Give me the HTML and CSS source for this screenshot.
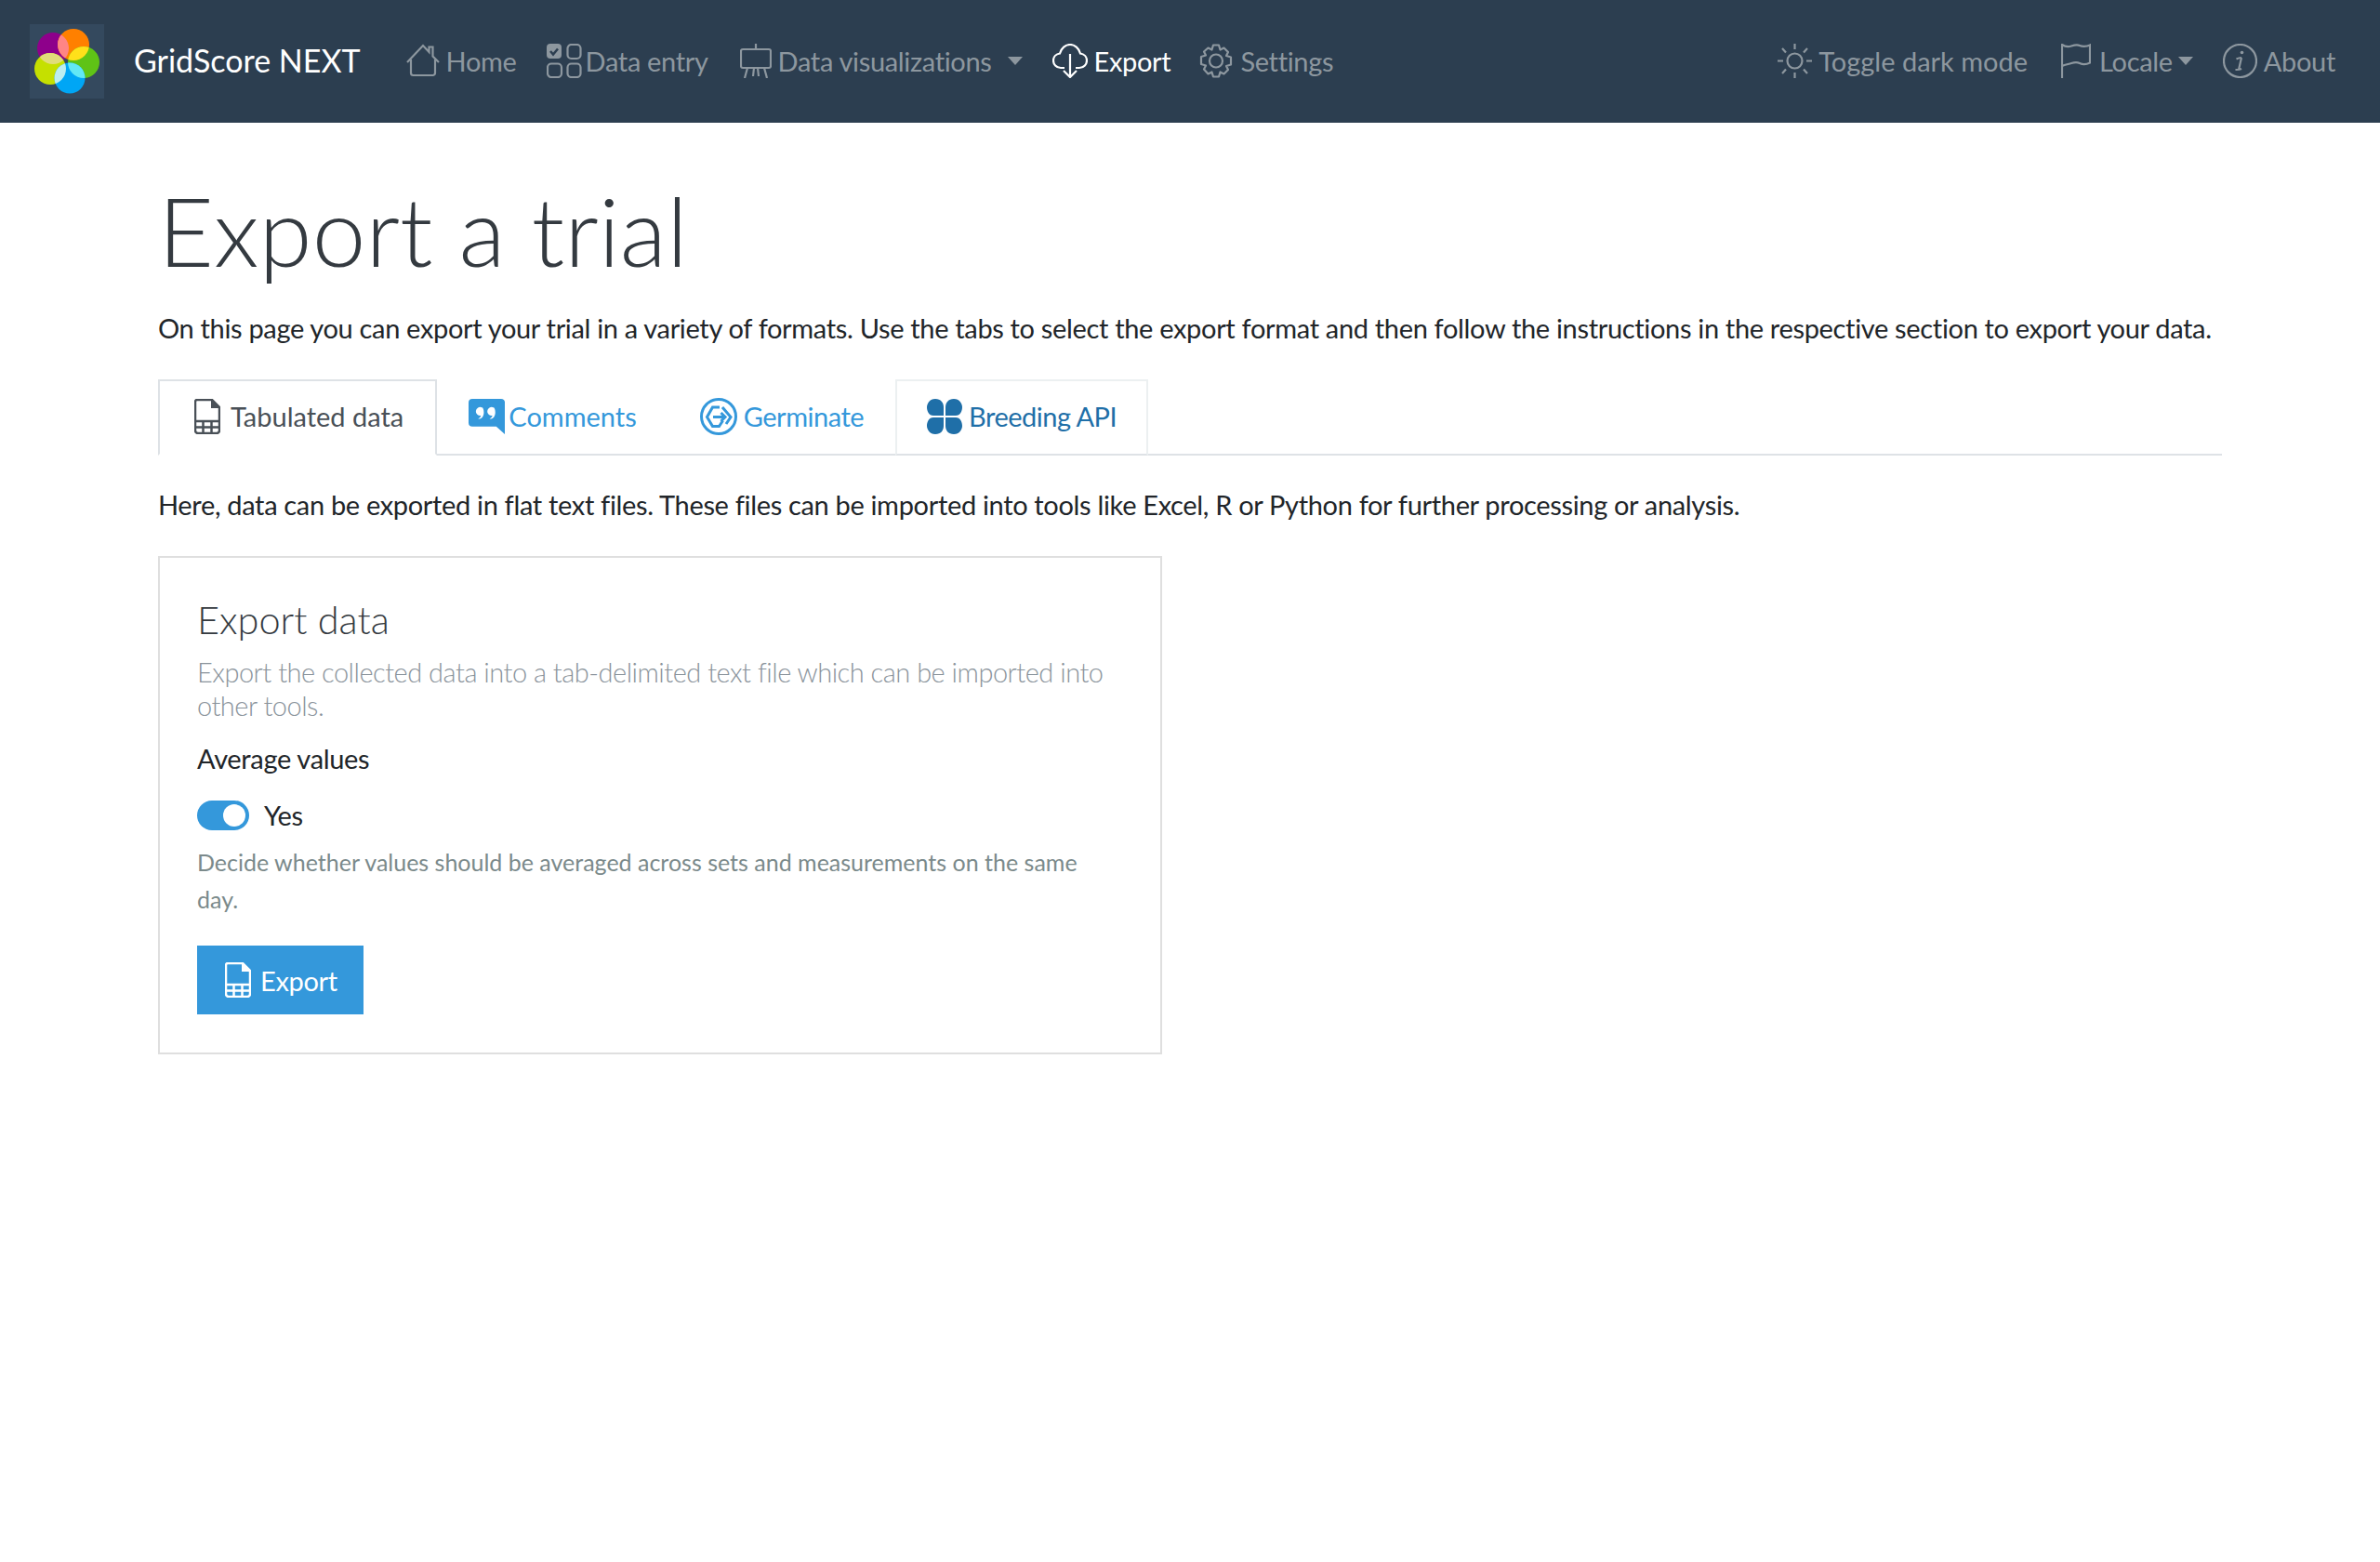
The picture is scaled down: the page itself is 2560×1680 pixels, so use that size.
FILE: index.html
```html
<!DOCTYPE html>
<html lang="en">

<head>
  <meta charset="UTF-8" />
  <meta name="viewport" content="width=device-width, initial-scale=1.0" />
  <title>GridScore NEXT</title>
  <link rel="stylesheet" href="styles.css">
</head>

<body>
  <nav class="navbar">
    <a class="brand" href="#">
      <span class="logo">
        <svg viewBox="0 0 80 80" width="80" height="80">
          <defs>
            <clipPath id="c-purple"><circle cx="25" cy="26" r="17" /></clipPath>
            <clipPath id="c-orange"><circle cx="47" cy="22" r="17" /></clipPath>
            <clipPath id="c-green"><circle cx="58" cy="41" r="17" /></clipPath>
            <clipPath id="c-lime"><circle cx="22" cy="48" r="17" /></clipPath>
          </defs>
          <circle cx="25" cy="26" r="17" fill="#8e008b" />
          <circle cx="47" cy="22" r="17" fill="#ff8000" />
          <circle cx="58" cy="41" r="17" fill="#5fc316" />
          <circle cx="22" cy="48" r="17" fill="#c5e000" />
          <circle cx="43" cy="58" r="16.500" fill="#00a6f5" />
          <circle cx="47" cy="22" r="17" fill="#ff8585" clip-path="url(#c-purple)" />
          <circle cx="58" cy="41" r="17" fill="#ffe01a" clip-path="url(#c-orange)" />
          <circle cx="22" cy="48" r="17" fill="#e0dd7a" clip-path="url(#c-purple)" />
          <circle cx="43" cy="58" r="16.500" fill="#62e8f5" clip-path="url(#c-green)" />
          <circle cx="43" cy="58" r="16.500" fill="#bdeef0" clip-path="url(#c-lime)" />
        </svg>
      </span>
      <span class="brand-name">GridScore NEXT</span>
    </a>

    <ul class="nav-list">
      <li><a class="nav-link" href="#">
          <svg class="nav-icon" viewBox="0 0 36 37"><path d="M1 20 18 2l6.500 7V3.500h4v10L35 20M5 17v14.500a2.500 2.500 0 0 0 2.500 2.500h21a2.500 2.500 0 0 0 2.500-2.500V17" /></svg>Home</a></li>
      <li class="item-entry"><a class="nav-link" href="#">
          <svg class="nav-icon" viewBox="0 0 38 37"><rect x="0" y="0" width="16" height="16" rx="4" fill="currentColor" stroke="none" /><path class="tick" d="m4 8 3 3.500 5-6" /><rect x="22.500" y="1" width="14" height="15" rx="4" /><rect x="1" y="21.500" width="15" height="14.500" rx="4" /><rect x="22.500" y="21.500" width="14" height="14.500" rx="4" /></svg>Data entry</a></li>
      <li><a class="nav-link caret caret-wide" href="#">
          <svg class="nav-icon" viewBox="0 0 34 37"><path d="M17 0v6M3 6h28a2 2 0 0 1 2 2v16a2 2 0 0 1-2 2H3a2 2 0 0 1-2-2V8a2 2 0 0 1 2-2ZM8 26 5 37M26 26l3 11M15 26l-1 9M19 26l1 9" /></svg>Data visualizations</a></li>
      <li><a class="nav-link active" href="#">
          <svg class="nav-icon" viewBox="0 0 38 37"><path d="M13 26H9c-5 0-8-4-8-8s3-7 7-7.500C9.500 5 14 1 19 1s9.500 4 11 9.500c4 .5 7 3.500 7 7.500 0 4-3 8-8 8h-4M19 11v25M12 29l7 7 7-7" /></svg>Export</a></li>
      <li><a class="nav-link" href="#">
          <svg class="nav-icon" viewBox="0 0 38 37"><circle cx="19" cy="18.500" r="7" /><path d="M16 1.500h6l1.500 5 4-2 4.500 4.500-2 4 5 1.500v8l-5 1.500 2 4-4.500 4.500-4-2-1.500 5h-6l-1.500-5-4 2L6 27.500l2-4-5-1.500v-8l5-1.500-2-4L10.500 4.500l4 2Z" stroke-linejoin="round" /></svg>Settings</a></li>
    </ul>

    <ul class="nav-list nav-right">
      <li class="item-toggle"><a class="nav-link" href="#">
          <svg class="nav-icon" viewBox="0 0 37 37"><circle cx="18.500" cy="18.500" r="8" /><path d="M18.500 0v6M18.500 31v6M0 18.500h6M31 18.500h6M5 5l4 4.500M28 27.500l4 4.500M5 32l4-4.500M28 9.500 32 5" /></svg>Toggle dark mode</a></li>
      <li class="item-locale"><a class="nav-link caret" href="#">
          <svg class="nav-icon" viewBox="0 0 32 37"><path d="M1 37V1c3 2 7 2.500 10 1.500s7-1.500 9-.5 7 1.500 11-.5v19c-4 2-8 2-11 .5s-6-1-9 0-7 1.500-10 3" /></svg>Locale</a></li>
      <li><a class="nav-link" href="#">
          <svg class="nav-icon" viewBox="0 0 37 37"><circle cx="18.500" cy="18.500" r="17.500" /><path d="m20 15-3 13M14.500 16.500c2-1 4-1.500 5.500-1.500M13.500 28c2 0 5-.2 6.500-1" /><circle class="dot" cx="20.500" cy="9.500" r="1.800" /></svg>About</a></li>
    </ul>
  </nav>

  <main class="container">
    <h1>Export a trial</h1>
    <p class="lead-text">On this page you can export your trial in a variety of formats. Use the tabs to select the export format and then follow the instructions in the respective section to export your data.</p>

    <ul class="tabs">
      <li class="tab active"><a href="#">
          <svg class="tab-icon icon-file" viewBox="0 0 28 38"><path d="M3 1h16l8 8v25a3 3 0 0 1-3 3H4a3 3 0 0 1-3-3V3a2 2 0 0 1 2-2Z" fill="none" stroke="currentColor" stroke-width="2.500" /><path d="M18 1v9h9Z" fill="currentColor" /><path d="M1 24h26M1 30.500h26M9.500 24v13M18.500 24v13" stroke="currentColor" stroke-width="2.500" fill="none" /></svg>Tabulated data</a></li>
      <li class="tab tab-comments"><a href="#">
          <svg class="tab-icon" viewBox="0 0 38 37"><path d="M4 0h30a4 4 0 0 1 4 4v33l-9-8H4a4 4 0 0 1-4-4V4a4 4 0 0 1 4-4Z" fill="currentColor" /><path d="M14 9a4.500 4.500 0 1 0 -1 8.500c-.3 1.500-1.500 2.500-3 3.500 4 0 6-3 6-7 0-3-1-5-2-5ZM26 9a4.500 4.500 0 1 0 -1 8.500c-.3 1.500-1.500 2.500-3 3.500 4 0 6-3 6-7 0-3-1-5-2-5Z" fill="#fff" /></svg>Comments</a></li>
      <li class="tab tab-tight"><a href="#">
          <svg class="tab-icon icon-round" viewBox="0 0 40 40"><circle cx="20" cy="20" r="18.500" fill="none" stroke="currentColor" stroke-width="3" /><path d="M21 10h-7.500l-6 10.500 6 10h7l4-6M14 20.500h13M22.500 16l4.500 4.500-4.500 4.500M24 10l9 10.500-5 7.500" fill="none" stroke="currentColor" stroke-width="3" /></svg>Germinate</a></li>
      <li class="tab tab-tight hovered"><a href="#">
          <svg class="tab-icon" viewBox="0 0 38 38"><path d="M18 18H7C2 18 0 13 0 9s3-9 9-9 9 4 9 9ZM20 18h11c5 0 7-5 7-9s-3-9-9-9-9 4-9 9ZM18 20H7c-5 0-7 5-7 9s3 9 9 9 9-4 9-9ZM20 20h11c5 0 7 5 7 9s-3 9-9 9-9-4-9-9Z" fill="currentColor" /></svg>Breeding API</a></li>
    </ul>

    <p class="tab-intro">Here, data can be exported in flat text files. These files can be imported into tools like Excel, R or Python for further processing or analysis.</p>

    <section class="card">
      <h4 class="card-title">Export data</h4>
      <p class="card-sub">Export the collected data into a tab-delimited text file which can be imported into other tools.</p>
      <div class="form-label">Average values</div>
      <div class="switch-row">
        <span class="switch"><span class="knob"></span></span>
        <span>Yes</span>
      </div>
      <small class="help">Decide whether values should be averaged across sets and measurements on the same day.</small>
      <button class="btn" type="button">
        <svg class="btn-icon" viewBox="0 0 28 38"><path d="M3 1h16l8 8v25a3 3 0 0 1-3 3H4a3 3 0 0 1-3-3V3a2 2 0 0 1 2-2Z" fill="none" stroke="currentColor" stroke-width="2.500" /><path d="M18 1v9h9Z" fill="currentColor" /><path d="M1 24h26M1 30.500h26M9.500 24v13M18.500 24v13" stroke="currentColor" stroke-width="2.500" fill="none" /></svg>Export</button>
    </section>
  </main>
</body>

</html>
```

FILE: styles.css
```css
body {
  font-family: Lato, "Noto Sans", sans-serif;
  font-size: 29px;
  letter-spacing: -0.33px;
  line-height: 45px;
  color: #212529;
  background-color: #fff;
  margin: 0;
}

a {
  text-decoration: none;
  color: inherit;
}

ul {
  list-style: none;
  margin: 0;
  padding: 0;
}

/* navbar */
.navbar {
  display: flex;
  align-items: center;
  height: 132px;
  padding: 0 32px;
  background-color: #2c3e50;
}

.brand {
  display: flex;
  align-items: center;
  margin-right: 49px;
  color: #fff;
}

.logo {
  display: block;
  width: 80px;
  height: 80px;
  background-color: #34495e;
  margin-right: 32px;
}

.logo svg {
  display: block;
}

.brand-name {
  font-size: 34px;
  letter-spacing: 0;
  padding-bottom: 3px;
}

.nav-list {
  display: flex;
  align-items: center;
  gap: 32px;
  padding-bottom: 2px;
}

.nav-right {
  margin-left: auto;
  padding-right: 16px;
}

.item-entry {
  margin-right: 2px;
}

.item-entry .nav-icon {
  margin-right: 4px;
}

.item-toggle {
  letter-spacing: 0;
}

.item-locale {
  margin-left: 4px;
}

.item-locale .nav-icon {
  margin-right: 9px;
}

.nav-link {
  display: flex;
  align-items: center;
  color: #8d979f;
}

.nav-link.active {
  color: #fff;
  margin-right: -2px;
}

.nav-link.caret::after {
  content: "";
  margin-left: 6px;
  border-top: 9px solid currentColor;
  border-left: 8px solid transparent;
  border-right: 8px solid transparent;
}

.nav-link.caret-wide::after {
  margin-left: 17px;
}

.nav-icon {
  height: 37px;
  width: auto;
  margin-right: 7px;
  fill: none;
  stroke: currentColor;
  stroke-width: 2.200;
  flex-shrink: 0;
}

.nav-icon .tick {
  stroke: #2c3e50;
  stroke-width: 2.500;
}

.nav-icon .dot {
  fill: currentColor;
  stroke: none;
}

/* page */
.container {
  padding: 0 170px;
  width: 2220px;
}

h1 {
  font-size: 103.500px;
  font-weight: 300;
  letter-spacing: 0;
  line-height: 134px;
  color: #343a40;
  margin: 0;
  padding-top: 48px;
}

.lead-text {
  margin: 16px 0 33px;
}

.tabs {
  display: flex;
  height: 82px;
  border-bottom: 2px solid #dee2e6;
  box-sizing: border-box;
}

.tab a {
  display: flex;
  align-items: center;
  height: 82px;
  box-sizing: border-box;
  padding: 0 32px 3px;
  border: 2px solid transparent;
  color: #3498db;
  letter-spacing: 0;
}

.tab.active a {
  color: #495057;
  background-color: #fff;
  border-color: #dee2e6 #dee2e6 #fff;
  padding-right: 34px;
}

.tab.hovered a {
  color: #1f6fa8;
  border-color: #ecf0f1 #ecf0f1 #dee2e6;
}

.tab-tight a {
  letter-spacing: -0.5px;
}

.tab-icon {
  height: 38px;
  width: auto;
  margin-right: 7px;
}

.tab-comments .tab-icon {
  margin-right: 4px;
}

.icon-file {
  margin-left: 5px;
  margin-right: 11px;
}

.icon-round {
  height: 40px;
}

.tab-intro {
  margin: 30px 0 33px;
}

/* card */
.card {
  width: 1080px;
  height: 536px;
  box-sizing: border-box;
  padding: 40px;
  border: 2px solid #dfdfdf;
}

.card-title {
  font-size: 41.500px;
  font-weight: 300;
  letter-spacing: 0;
  line-height: 50px;
  color: #343a40;
  margin: 1px 0 14px;
}

.card-sub {
  font-weight: 300;
  letter-spacing: -0.5px;
  line-height: 36px;
  color: #8a939b;
  margin: 0 0 16px;
}

.form-label {
  margin-bottom: 16px;
}

.switch-row {
  display: flex;
  align-items: center;
  gap: 16px;
  height: 45px;
}

.switch {
  display: block;
  width: 56px;
  height: 32px;
  border-radius: 16px;
  background-color: #3498db;
  padding: 4px 4px 4px 28px;
  box-sizing: border-box;
}

.knob {
  display: block;
  width: 24px;
  height: 24px;
  border-radius: 50%;
  background-color: #fff;
}

.help {
  display: block;
  font-size: 25px;
  letter-spacing: 0;
  line-height: 40px;
  color: #7b8a8b;
  margin: 8px 0 30px;
}

.btn {
  display: flex;
  align-items: center;
  height: 74px;
  padding: 0 28px 0 30px;
  border: 0;
  color: #fff;
  background-color: #3498db;
  font: inherit;
  letter-spacing: inherit;
}

.btn-icon {
  height: 38px;
  width: auto;
  margin-right: 10px;
}
```
